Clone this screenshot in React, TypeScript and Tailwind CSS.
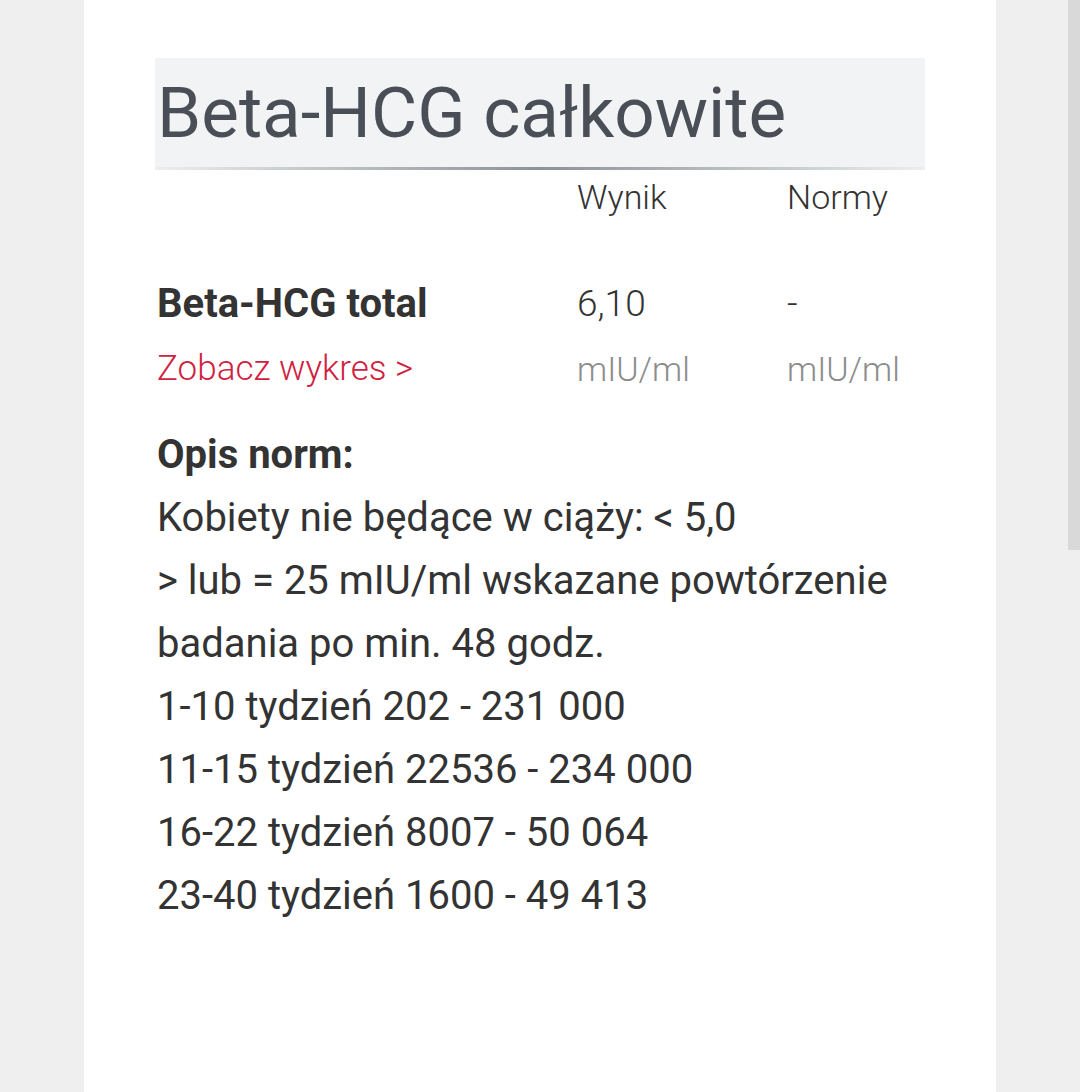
import React from "react";

const ranges = [
  "Kobiety nie będące w ciąży: < 5,0",
  "> lub = 25 mIU/ml wskazane powtórzenie",
  "badania po min. 48 godz.",
  "1-10 tydzień 202 - 231 000",
  "11-15 tydzień 22536 - 234 000",
  "16-22 tydzień 8007 - 50 064",
  "23-40 tydzień 1600 - 49 413",
];

function Header() {
  return (
    <div className="mt-[58px] bg-[#f2f3f5]">
      <h1 className="h-[109px] pl-[2px] text-[71px] leading-[109px] font-normal text-[#4a4f57]">
        Beta-HCG całkowite
      </h1>
      <div className="h-[3px] bg-gradient-to-r from-[#eceeef] via-[#8d9297] to-[#eceeef]" />
    </div>
  );
}

function ResultTable() {
  return (
    <div className="pl-[2px]">
      <div className="flex h-[54px] items-center text-[34px] font-light text-[#333]">
        <div className="w-[420px]" />
        <div className="w-[210px]">Wynik</div>
        <div>Normy</div>
      </div>
      <div className="mt-[57px] flex h-[46px] items-center text-[#333]">
        <div className="w-[420px] text-[40px] font-bold">Beta-HCG total</div>
        <div className="w-[210px] text-[37px] font-light">6,10</div>
        <div className="text-[37px] font-light">-</div>
      </div>
      <div className="mt-[19px] flex h-[46px] items-center font-light">
        <div className="w-[420px] text-[35px] text-[#d0223f]">Zobacz wykres &gt;</div>
        <div className="w-[210px] text-[34px] text-[#8c8c8c]">mIU/ml</div>
        <div className="text-[34px] text-[#8c8c8c]">mIU/ml</div>
      </div>
    </div>
  );
}

function NormsDescription() {
  return (
    <div className="mt-[31px] pl-[2px] text-[40px] leading-[63px] text-[#333]">
      <div className="font-bold">Opis norm:</div>
      {ranges.map((line) => (
        <div key={line}>{line}</div>
      ))}
    </div>
  );
}

export default function App() {
  return (
    <div
      className="flex h-[1092px] w-[1080px] overflow-hidden bg-[#efefef]"
      style={{ fontFamily: "Roboto, 'Noto Sans', sans-serif" }}
    >
      <div className="ml-[84px] h-full w-[912px] bg-white px-[71px]">
        <Header />
        <ResultTable />
        <NormsDescription />
      </div>
      <div className="flex-1" />
      <div className="h-[550px] w-[12px] bg-[#d9d9d9]" />
    </div>
  );
}
